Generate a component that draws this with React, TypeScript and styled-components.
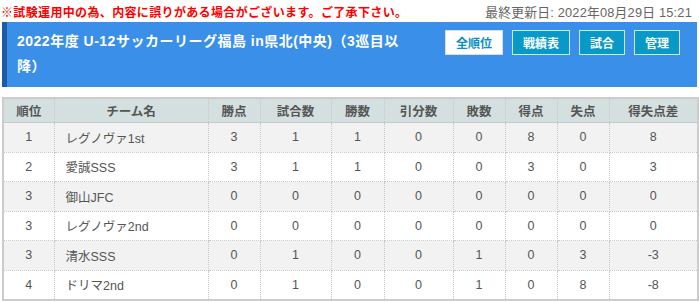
import React from "react";
import styled, { createGlobalStyle } from "styled-components";

const Global = createGlobalStyle`
  html, body { margin: 0; padding: 0; background: #fff; }
  body { font-family: "Liberation Sans", "Noto Sans CJK JP", sans-serif; }
`;

const Page = styled.div`
  width: 699px;
  padding: 0 2px;
  box-sizing: border-box;
`;

const TopLine = styled.div`
  display: flex;
  justify-content: space-between;
  align-items: center;
  height: 22px;
`;

const Notice = styled.span`
  color: #ff0000;
  font-weight: bold;
  font-size: 12px;
  letter-spacing: 0.35px;
  margin-left: -1px;
`;

const Updated = styled.span`
  color: #666;
  font-size: 12.8px;
  letter-spacing: 0.2px;
  margin-right: 5px;
`;

const Header = styled.div`
  display: flex;
  justify-content: space-between;
  align-items: flex-start;
  background: #3a90e8;
  border-left: 5px solid #1a5ca5;
  height: 65px;
  box-sizing: border-box;
  padding: 7px 17px 0 10px;
`;

const Title = styled.h1`
  margin: 0;
  color: #fff;
  font-size: 14px;
  font-weight: bold;
  line-height: 25px;
  letter-spacing: 0.5px;
  width: 400px;
`;

const Buttons = styled.div`
  display: flex;
  gap: 9px;
  padding-top: 1px;
`;

const Btn = styled.span<{ $active?: boolean }>`
  display: inline-flex;
  align-items: center;
  justify-content: center;
  height: 25px;
  padding: 0 10px;
  box-sizing: border-box;
  border: 1px solid ${(p) => (p.$active ? "#ddd" : "#cfe6f5")};
  background: ${(p) => (p.$active ? "#fff" : "#0899c8")};
  color: ${(p) => (p.$active ? "#0a8ec4" : "#fff")};
  font-size: 12px;
  font-weight: bold;
`;

const Table = styled.table`
  margin-top: 10px;
  width: 695px;
  border-collapse: collapse;
  table-layout: fixed;
  border: 2px solid #ccc;
  font-size: 12.5px;
  color: #555;
`;

const Th = styled.th`
  background: #d4e0e0;
  height: 23px;
  font-weight: bold;
  color: #555;
  border: 1px dotted #c8c8c8;
  border-bottom: 1px solid #c8c8c8;
  padding: 0;
`;

const Tr = styled.tr<{ $odd: boolean }>`
  background: ${(p) => (p.$odd ? "#f2f2f2" : "#fff")};
`;

const Td = styled.td<{ $left?: boolean }>`
  height: 28.5px;
  padding: 0 ${(p) => (p.$left ? "11px" : "0")};
  text-align: ${(p) => (p.$left ? "left" : "center")};
  border: 1px dotted #c8c8c8;
`;

const cols = [51, 154, 52, 71, 53, 69, 52, 52, 52, 89];
const heads = ["順位", "チーム名", "勝点", "試合数", "勝数", "引分数", "敗数", "得点", "失点", "得失点差"];

const rows: (string | number)[][] = [
  [1, "レグノヴァ1st", 3, 1, 1, 0, 0, 8, 0, 8],
  [2, "愛誠SSS", 3, 1, 1, 0, 0, 3, 0, 3],
  [3, "御山JFC", 0, 0, 0, 0, 0, 0, 0, 0],
  [3, "レグノヴァ2nd", 0, 0, 0, 0, 0, 0, 0, 0],
  [3, "清水SSS", 0, 1, 0, 0, 1, 0, 3, -3],
  [4, "ドリマ2nd", 0, 1, 0, 0, 1, 0, 8, -8],
];

export default function App() {
  return (
    <Page>
      <Global />
      <TopLine>
        <Notice>※試験運用中の為、内容に誤りがある場合がございます。ご了承下さい。</Notice>
        <Updated>最終更新日: 2022年08月29日 15:21</Updated>
      </TopLine>
      <Header>
        <Title>2022年度 U-12サッカーリーグ福島 in県北(中央)（3巡目以降）</Title>
        <Buttons>
          <Btn $active>全順位</Btn>
          <Btn>戦績表</Btn>
          <Btn>試合</Btn>
          <Btn>管理</Btn>
        </Buttons>
      </Header>
      <Table>
        <colgroup>
          {cols.map((w, i) => (
            <col key={i} style={{ width: w }} />
          ))}
        </colgroup>
        <thead>
          <tr>
            {heads.map((h) => (
              <Th key={h}>{h}</Th>
            ))}
          </tr>
        </thead>
        <tbody>
          {rows.map((r, i) => (
            <Tr key={i} $odd={i % 2 === 0}>
              {r.map((c, j) => (
                <Td key={j} $left={j === 1}>
                  {c}
                </Td>
              ))}
            </Tr>
          ))}
        </tbody>
      </Table>
    </Page>
  );
}
